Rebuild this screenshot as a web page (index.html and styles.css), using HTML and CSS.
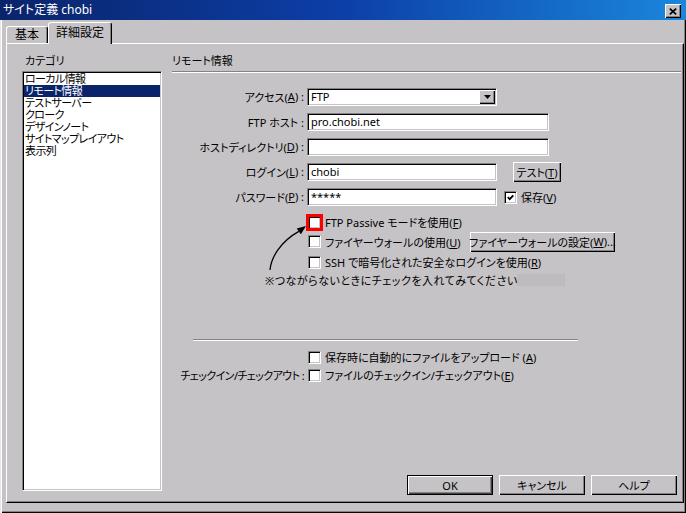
FILE: index.html
```html
<!DOCTYPE html>
<html lang="ja">
<head>
<meta charset="utf-8">
<title>サイト定義 chobi</title>
<link rel="stylesheet" href="styles.css">
</head>
<body>
<div class="window">
  <div class="titlebar">
    <span class="title">サイト定義 chobi</span>
    <span class="close"><svg width="8" height="7" viewBox="0 0 8 7"><path d="M0.8 0.6L7.2 6.4M7.2 0.6L0.8 6.4" stroke="#000" stroke-width="1.7" fill="none"/></svg></span>
  </div>
  <div class="frame">
    <div class="tabs">
      <div class="tab">基本</div>
      <div class="tab active">詳細設定</div>
    </div>
    <div class="panel">
      <div class="cat">
        <div class="cat-label">カテゴリ</div>
        <ul class="list">
          <li>ローカル情報</li>
          <li class="sel">リモート情報</li>
          <li>テストサーバー</li>
          <li>クローク</li>
          <li>デザインノート</li>
          <li>サイトマップレイアウト</li>
          <li>表示列</li>
        </ul>
      </div>
      <div class="main">
        <div class="heading">リモート情報</div>
        <div class="form">
          <div class="row">
            <span class="lbl">アクセス(<u>A</u>) :</span>
            <div class="field select w190"><span>FTP</span><span class="drop"><svg width="7" height="4" viewBox="0 0 7 4"><path d="M0 0H7L3.5 4Z" fill="#000"/></svg></span></div>
          </div>
          <div class="row">
            <span class="lbl">FTP ホスト :</span>
            <div class="field w242">pro.chobi.net</div>
          </div>
          <div class="row">
            <span class="lbl">ホストディレクトリ(<u>D</u>) :</span>
            <div class="field w242"></div>
          </div>
          <div class="row">
            <span class="lbl">ログイン(<u>L</u>) :</span>
            <div class="field w190">chobi</div>
            <button class="btn test">テスト(<u>T</u>)</button>
          </div>
          <div class="row">
            <span class="lbl">パスワード(<u>P</u>) :</span>
            <div class="field w190">*****</div>
            <span class="cb save"><svg width="7" height="7" viewBox="0 0 7 7"><path d="M0.8 3.2L2.7 5.2L6.3 1.3" stroke="#000" stroke-width="1.8" fill="none"/></svg></span>
            <span class="ctext">保存(<u>V</u>)</span>
          </div>
        </div>
        <div class="crow passive">
          <span class="cb red"></span>
          <span class="ctext">FTP Passive モードを使用(<u>F</u>)</span>
        </div>
        <div class="crow fw">
          <span class="cb"></span>
          <span class="ctext fwtext">ファイヤーウォールの使用(<u>U</u>)</span>
          <button class="btn fwbtn">ファイヤーウォールの設定(<u>W</u>)...</button>
        </div>
        <div class="crow ssh">
          <span class="cb"></span>
          <span class="ctext">SSH で暗号化された安全なログインを使用(<u>R</u>)</span>
        </div>
        <div class="note">
          <span class="note-text">※つながらないときにチェックを入れてみてください</span>
          <span class="note-box"></span>
        </div>
        <div class="sep"></div>
        <div class="crow upload">
          <span class="cb"></span>
          <span class="ctext">保存時に自動的にファイルをアップロード (<u>A</u>)</span>
        </div>
        <div class="crow checkin">
          <span class="lbl tight">チェックイン/チェックアウト :</span>
          <span class="cb"></span>
          <span class="ctext">ファイルのチェックイン/チェックアウト(<u>E</u>)</span>
        </div>
        <div class="buttons">
          <button class="btn dlg default">OK</button>
          <button class="btn dlg">キャンセル</button>
          <button class="btn dlg">ヘルプ</button>
        </div>
      </div>
    </div>
  </div>
</div>
<svg class="arrow" width="56" height="56" viewBox="0 0 56 56">
  <path d="M10 50C11 38 20 22 38.8 11.4" stroke="#000" stroke-width="1.3" fill="none"/>
  <path d="M46 6L40.9 14.2L36.7 8.6Z" fill="#000"/>
</svg>
</body>
</html>
```

FILE: styles.css
```css
* { box-sizing: border-box; }
html, body { margin: 0; padding: 0; }
body {
  width: 686px;
  height: 513px;
  overflow: hidden;
  position: relative;
  background: #c6c3c6;
  color: #000;
  font-family: "Noto Sans", "Noto Sans CJK JP", sans-serif;
  font-size: 11px;
  font-feature-settings: "palt";
}
u { text-decoration: underline; text-underline-offset: 1px; }

.window { width: 686px; height: 513px; display: flex; flex-direction: column; }

.titlebar {
  height: 20px;
  flex: none;
  display: flex;
  justify-content: space-between;
  padding: 0 5px 0 3px;
  background: linear-gradient(90deg, #0a246a 0%, #0c3fa8 50%, #1a86dc 100%);
  color: #fff;
}
.title { line-height: 20px; font-size: 12px; }
.close {
  align-self: flex-start;
  margin-top: 4px;
  width: 16px;
  height: 14px;
  background: #c6c3c6;
  box-shadow: inset 1px 1px #fff, inset -1px -1px #000, inset -2px -2px #848284;
  display: flex;
  align-items: center;
  justify-content: center;
}

.frame {
  flex: 1;
  display: flex;
  flex-direction: column;
  padding: 2px 2px 10px 6px;
  box-shadow: inset 1px 0 #e6e6e6, inset 2px 0 #fff, inset -1px -1px #000, inset -2px -2px #848284;
}

.tabs { display: flex; align-items: flex-end; height: 21px; flex: none; position: relative; z-index: 2; }
.tab {
  height: 17px;
  width: 42px;
  text-align: center;
  line-height: 15px;
  font-size: 12px;
  background: #c6c3c6;
  border: 1px solid #fff;
  border-bottom: none;
  border-right-color: #000;
  border-radius: 3px 3px 0 0;
  box-shadow: inset -1px 0 #848284;
}
.tab.active { height: 22px; width: 64px; margin-bottom: -1px; line-height: 19px; }

.panel {
  height: 460px;
  flex: none;
  display: flex;
  padding-top: 11px;
  border: 1px solid #fff;
  border-right-color: #000;
  border-bottom-color: #000;
  box-shadow: inset -1px -1px #848284;
}

.cat { width: 155px; flex: none; padding-left: 15px; display: flex; flex-direction: column; }
.cat-label { line-height: 12px; height: 12px; margin: 0 0 4px 3px; }
.list {
  list-style: none;
  margin: 0;
  padding: 1px;
  width: 140px;
  height: 420px;
  background: #fff;
  border: 1px solid;
  border-color: #848284 #fff #fff #848284;
  box-shadow: inset 1px 1px #000, inset -1px -1px #c6c3c6;
}
.list li { line-height: 12px; height: 12px; padding-left: 1px; white-space: nowrap; letter-spacing: -0.6px; }
.list li.sel { background: #0a246a; color: #fff; }

.main { flex: 1; display: flex; flex-direction: column; margin-left: 10px; padding-right: 2px; padding-bottom: 7px; }
.heading {
  line-height: 12px;
  padding-bottom: 4px;
  border-bottom: 1px solid #848284;
  box-shadow: 0 1px #fff;
}

.form { display: flex; flex-direction: column; gap: 7px; margin-top: 16px; }
.row { display: flex; align-items: center; height: 18px; }
.lbl { width: 132px; flex: none; display: flex; justify-content: flex-end; white-space: nowrap; margin-right: 3px; }
.lbl.tight { letter-spacing: -0.6px; }

.field {
  height: 18px;
  flex: none;
  display: flex;
  align-items: center;
  padding: 0 2px 0 3px;
  background: #fff;
  border: 1px solid;
  border-color: #848284 #fff #fff #848284;
  box-shadow: inset 1px 1px #000, inset -1px -1px #c6c3c6;
  line-height: 14px;
  white-space: nowrap;
}
.w190 { width: 190px; }
.w242 { width: 242px; }
.select { padding-right: 1px; justify-content: space-between; }
.drop {
  width: 16px;
  height: 14px;
  background: #c6c3c6;
  box-shadow: inset 1px 1px #fff, inset -1px -1px #000, inset -2px -2px #848284;
  display: flex;
  align-items: center;
  justify-content: center;
}

.btn {
  font: inherit;
  color: #000;
  padding: 0;
  margin: 0;
  border: 0;
  height: 20px;
  background: #c6c3c6;
  box-shadow: inset 1px 1px #fff, inset -1px -1px #000, inset -2px -2px #848284;
  display: flex;
  align-items: center;
  justify-content: center;
  white-space: nowrap;
  flex: none;
}
.test { width: 48px; margin-left: 16px; }

.cb {
  width: 13px;
  height: 13px;
  flex: none;
  background: #fff;
  border: 1px solid;
  border-color: #848284 #fff #fff #848284;
  box-shadow: inset 1px 1px #000, inset -1px -1px #c6c3c6;
  display: flex;
  align-items: center;
  justify-content: center;
}
.cb.red { outline: 3px solid #f00; outline-offset: -1px; }
.save { margin-left: 7px; }
.ctext { margin-left: 4px; white-space: nowrap; }

.crow { display: flex; align-items: center; padding-left: 136px; }
.passive { height: 18px; margin-top: 7px; }
.fw { height: 21px; }
.fwtext { width: 143px; }
.fwbtn { width: 145px; margin-left: 2px; }
.ssh { height: 20px; }

.note { display: flex; align-items: center; height: 16px; padding-left: 93px; }
.note-text { width: 252px; flex: none; white-space: nowrap; letter-spacing: 0.5px; }
.note-box { width: 48px; height: 12px; background: #bdbbbd; }

.sep {
  width: 385px;
  height: 2px;
  margin: 51px 0 0 21px;
  border-top: 1px solid #848284;
  border-bottom: 1px solid #fff;
}
.upload { height: 18px; margin-top: 7px; }
.checkin { height: 18px; padding-left: 0; }
.checkin .lbl { margin-right: 4px; }

.buttons { margin-top: auto; display: flex; justify-content: flex-end; gap: 6px; padding-right: 4px; }
.dlg { width: 86px; }
.dlg.default {
  border: 1px solid #000;
  box-shadow: inset 1px 1px #fff, inset -1px -1px #404040, inset -2px -2px #848284;
}

.arrow { position: absolute; left: 260px; top: 220px; pointer-events: none; }
```
